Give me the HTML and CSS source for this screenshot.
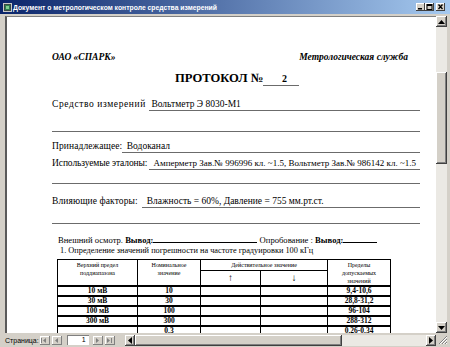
FILE: index.html
```html
<!DOCTYPE html>
<html lang="ru">
  <head>
    <meta charset="UTF-8" />
    <title>Документ о метрологическом контроле средства измерений</title>
    <link rel="stylesheet" href="styles.css">
  </head>
  <body>
    <div class="window">
      <div class="titlebar">
        <svg class="app-icon" width="9" height="9" viewBox="0 0 9 9">
          <rect x="0.5" y="0.5" width="8" height="8" fill="#3a4a44" stroke="#c8c8c8" />
          <rect x="2" y="2" width="5" height="5" fill="#2e7d4f" />
          <rect x="3" y="3" width="3" height="3" fill="#7fd08f" />
        </svg>
        <span class="title">Документ о метрологическом контроле средства измерений</span>
        <div class="caption-buttons">
          <div class="cap">
            <svg width="9" height="8" viewBox="0 0 9 8"><rect x="2" y="5" width="4" height="1.5" fill="#000" /></svg>
          </div>
          <div class="cap">
            <svg width="9" height="8" viewBox="0 0 9 8"><rect x="2" y="1.5" width="5" height="5" fill="none" stroke="#000" /><rect x="2" y="1.5" width="5" height="1.5" fill="#000" /></svg>
          </div>
          <div class="cap close">
            <svg width="9" height="8" viewBox="0 0 9 8"><path d="M2.5 1.5 L6.5 6 M6.5 1.5 L2.5 6" stroke="#000" stroke-width="1.3" /></svg>
          </div>
        </div>
      </div>

      <div class="client">
        <div class="doc">
          <div class="page">
            <div class="org-row">
              <span>ОАО «СПАРК»</span>
              <span>Метрологическая служба</span>
            </div>

            <h1 class="protocol">ПРОТОКОЛ №<span class="num">2</span></h1>

            <div class="field-row first">
              <span class="label w-device">Средство измерений</span>
              <span class="value">&nbsp;Вольтметр Э 8030-М1</span>
            </div>
            <div class="blank-line tall"></div>

            <div class="field-row owner">
              <span class="label w-owner">Принадлежащее:</span>
              <span class="value">&nbsp;&nbsp;Водоканал</span>
            </div>

            <div class="field-row standards">
              <span class="label w-std">Используемые эталоны:</span>
              <span class="value small">&nbsp;&nbsp;Амперметр Зав.№ 996996 кл. ~1.5, Вольтметр Зав.№ 986142 кл. ~1.5</span>
            </div>
            <div class="blank-line"></div>

            <div class="field-row factors">
              <span class="label w-factors">Влияющие факторы:</span>
              <span class="value">&nbsp;&nbsp;Влажность = 60%, Давление = 755 мм.рт.ст.</span>
            </div>
            <div class="blank-line mid"></div>

            <p class="check-row">Внешний осмотр. <b>Вывод:</b><span class="blank wide"></span> Опробование : <b>Вывод:</b><span class="blank short"></span></p>
            <p class="section">1. Определение значений погрешности на частоте градуировки 100 кГц</p>

            <table class="grid">
              <colgroup>
                <col class="c1"><col class="c2"><col class="c3"><col class="c4"><col class="c5">
              </colgroup>
              <thead>
                <tr class="head-top">
                  <th rowspan="2">Верхний предел<br>поддиапазона</th>
                  <th rowspan="2">Номинальное<br>значение</th>
                  <th colspan="2">Действительное значение</th>
                  <th rowspan="2">Пределы<br>допускаемых<br>значений</th>
                </tr>
                <tr class="head-arrows">
                  <th class="arrow">↑</th>
                  <th class="arrow">↓</th>
                </tr>
              </thead>
              <tbody>
                <tr><td>10 мВ</td><td>10</td><td></td><td></td><td>9,4-10,6</td></tr>
                <tr><td>30 мВ</td><td>30</td><td></td><td></td><td>28,8-31,2</td></tr>
                <tr><td>100 мВ</td><td>100</td><td></td><td></td><td>96-104</td></tr>
                <tr><td>300 мВ</td><td>300</td><td></td><td></td><td>288-312</td></tr>
                <tr><td></td><td>0,3</td><td></td><td></td><td>0,26-0,34</td></tr>
              </tbody>
            </table>
          </div>
        </div>

        <div class="vscroll">
          <div class="sb-btn">
            <svg width="7" height="4" viewBox="0 0 7 4"><path d="M3.5 0 L7 4 L0 4 Z" fill="#000" /></svg>
          </div>
          <div class="v-track">
            <div class="v-thumb"></div>
          </div>
          <div class="sb-btn">
            <svg width="7" height="4" viewBox="0 0 7 4"><path d="M0 0 L7 0 L3.5 4 Z" fill="#000" /></svg>
          </div>
        </div>
      </div>

      <div class="statusbar">
        <span class="pager-label">Страница:</span>
        <div class="nav-btn">
          <svg width="7" height="5" viewBox="0 0 7 5"><rect x="0" y="0" width="1" height="5" fill="#808080" /><path d="M5 0 L2 2.5 L5 5 Z" fill="#808080" /></svg>
        </div>
        <div class="nav-btn">
          <svg width="7" height="5" viewBox="0 0 7 5"><path d="M5 0 L2 2.5 L5 5 Z" fill="#808080" /></svg>
        </div>
        <div class="page-box">1</div>
        <div class="nav-btn">
          <svg width="7" height="5" viewBox="0 0 7 5"><path d="M2 0 L5 2.5 L2 5 Z" fill="#808080" /></svg>
        </div>
        <div class="nav-btn">
          <svg width="7" height="5" viewBox="0 0 7 5"><path d="M1 0 L4 2.5 L1 5 Z" fill="#808080" /><rect x="5" y="0" width="1" height="5" fill="#808080" /></svg>
        </div>

        <div class="hscroll">
          <div class="sb-btn h">
            <svg width="4" height="7" viewBox="0 0 4 7"><path d="M4 0 L0 3.5 L4 7 Z" fill="#000" /></svg>
          </div>
          <div class="h-thumb"></div>
          <div class="h-track"></div>
          <div class="sb-btn h">
            <svg width="4" height="7" viewBox="0 0 4 7"><path d="M0 0 L4 3.5 L0 7 Z" fill="#000" /></svg>
          </div>
        </div>
        <div class="grip">
          <svg width="11" height="11" viewBox="0 0 11 11">
            <path d="M10 2 L2 10 M10 5 L5 10 M10 8 L8 10" stroke="#808080" stroke-width="1" />
            <path d="M10 3 L3 10 M10 6 L6 10 M10 9 L9 10" stroke="#fff" stroke-width="1" />
          </svg>
        </div>
      </div>
    </div>
  </body>
</html>
```

FILE: styles.css
```css
* {
  margin: 0;
  padding: 0;
  box-sizing: border-box;
}
body,
html {
  width: 100%;
  height: 100%;
  overflow: hidden;
  background: #d4d0c8;
  font-family: "Liberation Serif", serif;
}
.window {
  display: flex;
  flex-direction: column;
  width: 450px;
  height: 347px;
  background: #d4d0c8;
}

/* title bar */
.titlebar {
  display: flex;
  align-items: center;
  height: 14px;
  padding-left: 3px;
  background: linear-gradient(to right, #0a246a, #a6caf0);
}
.app-icon {
  flex: none;
}
.title {
  margin-left: 1px;
  color: #fff;
  font: bold 6.8px "Liberation Sans", sans-serif;
  white-space: nowrap;
}
.caption-buttons {
  display: flex;
  margin-left: auto;
  margin-right: 5px;
}
.cap {
  display: flex;
  width: 9px;
  height: 8px;
  background: #d4d0c8;
  box-shadow: inset -1px -1px #404040, inset 1px 1px #fff;
}
.cap.close {
  margin-left: 2px;
}

/* client area */
.client {
  display: flex;
  flex: 1;
  min-height: 0;
  padding: 2px 3px 0 5px;
}
.doc {
  flex: 1;
  overflow: hidden;
  background: #fff;
  border-top: 1px solid #808080;
  border-left: 2px solid #5a5a5a;
}
.page {
  padding: 34px 16px 0 45px;
  font-size: 9.5px;
  color: #000;
}
.org-row {
  display: flex;
  justify-content: space-between;
  height: 12px;
  line-height: 12px;
  padding-right: 12px;
  font-size: 9.5px;
  font-weight: bold;
  font-style: italic;
}
.protocol {
  margin: 7px 0 0 123px;
  height: 16px;
  line-height: 16px;
  font-size: 12.6px;
  font-weight: bold;
}
.num {
  display: inline-block;
  width: 36px;
  height: 15px;
  padding-left: 6px;
  border-bottom: 1px solid #6b6b6b;
  font-size: 10px;
  text-align: center;
}
.field-row {
  display: flex;
  height: 13px;
  line-height: 12px;
  white-space: nowrap;
}
.field-row.first {
  margin-top: 12px;
}
.field-row.owner {
  margin-top: 8px;
}
.field-row.standards {
  margin-top: 4px;
}
.field-row.factors {
  margin-top: 11px;
}
.label {
  flex: none;
  letter-spacing: 0.1px;
}
.w-device {
  width: 97px;
  letter-spacing: 0.6px;
}
.w-owner {
  width: 70px;
}
.w-std {
  width: 97px;
  letter-spacing: -0.1px;
}
.w-factors {
  width: 90px;
}
.value {
  flex: 1;
  overflow: hidden;
  border-bottom: 1px solid #6b6b6b;
}
.value.small {
  font-size: 9px;
}
.blank-line {
  height: 14px;
  border-bottom: 1px solid #6b6b6b;
}
.blank-line.tall {
  height: 21px;
}
.blank-line.mid {
  height: 16px;
}
.check-row {
  margin: 10px 0 0 6px;
  height: 11px;
  line-height: 11px;
  font-size: 8.6px;
  white-space: nowrap;
}
.blank {
  display: inline-block;
  height: 9px;
  border-bottom: 1px solid #000;
  vertical-align: baseline;
}
.blank.wide {
  width: 104px;
}
.blank.short {
  width: 34px;
}
.section {
  margin-left: 8px;
  height: 11px;
  line-height: 11px;
  font-size: 8.3px;
  white-space: nowrap;
}

/* table */
.grid {
  margin: 3px 0 0 5px;
  width: 334px;
  border-collapse: collapse;
  table-layout: fixed;
  font-size: 6px;
  color: #000;
}
.c1 {
  width: 80px;
}
.c2 {
  width: 63px;
}
.c3 {
  width: 60px;
}
.c4 {
  width: 67px;
}
.c5 {
  width: 63px;
}
.grid th,
.grid td {
  border: 1px solid #000;
  text-align: center;
  padding: 0;
}
.grid th {
  font-weight: normal;
  vertical-align: top;
  line-height: 8px;
  padding-top: 1px;
}
.head-top th {
  height: 10px;
}
.head-arrows th {
  height: 14px;
}
.grid th.arrow {
  font-size: 10px;
  line-height: 12px;
}
.grid td {
  height: 10px;
  line-height: 8px;
  font-size: 7.5px;
  font-weight: bold;
  color: #000;
  border-top: 2px solid #000;
}

/* scroll bars */
.vscroll {
  display: flex;
  flex-direction: column;
  width: 11px;
}
.sb-btn {
  display: flex;
  align-items: center;
  justify-content: center;
  flex: none;
  width: 11px;
  height: 11px;
  background: #d4d0c8;
  box-shadow: inset -1px -1px #404040, inset 1px 1px #fff, inset -2px -2px #808080;
}
.v-track {
  flex: 1;
  padding-top: 45px;
  background: #ebe9e4;
}
.v-thumb {
  height: 92px;
  background: #d4d0c8;
  box-shadow: inset -1px -1px #404040, inset 1px 1px #fff, inset -2px -2px #808080;
}

/* status bar */
.statusbar {
  display: flex;
  align-items: center;
  height: 14px;
  padding-left: 5px;
  font: 7px "Liberation Sans", sans-serif;
}
.pager-label {
  width: 35px;
}
.nav-btn {
  display: flex;
  align-items: center;
  justify-content: center;
  width: 10px;
  height: 9px;
  margin-right: 2px;
  background: #d4d0c8;
  box-shadow: inset -1px -1px #808080, inset 1px 1px #fff;
}
.page-box {
  width: 22px;
  height: 10px;
  margin: 0 4px 0 3px;
  padding-right: 3px;
  line-height: 9px;
  text-align: right;
  background: #fff;
  box-shadow: inset 1px 1px #808080, inset -1px -1px #fff;
}
.hscroll {
  display: flex;
  width: 313px;
  height: 11px;
  margin-left: 8px;
}
.sb-btn.h {
  width: 10px;
}
.h-thumb {
  width: 207px;
  background: #d4d0c8;
  box-shadow: inset -1px -1px #404040, inset 1px 1px #fff, inset -2px -2px #808080;
}
.h-track {
  flex: 1;
  background: #ebe9e4;
}
.grip {
  display: flex;
  align-items: flex-end;
  margin-left: auto;
  width: 14px;
  height: 14px;
  padding: 0 2px 2px 1px;
}
```
